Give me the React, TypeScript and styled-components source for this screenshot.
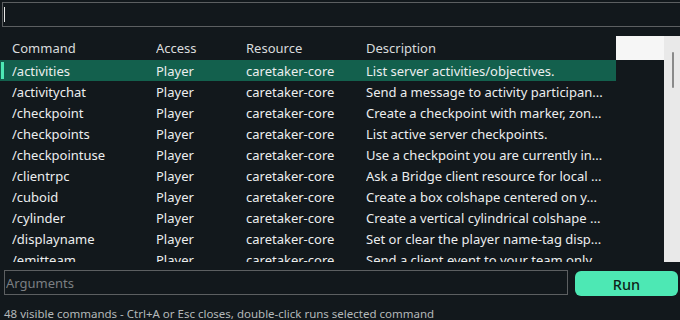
import styled, { createGlobalStyle } from "styled-components";

const GlobalStyle = createGlobalStyle`
  html, body {
    margin: 0;
    padding: 0;
    background: #12181c;
    overflow: hidden;
  }
  * {
    box-sizing: border-box;
  }
`;

const Page = styled.div`
  width: 680px;
  height: 320px;
  background: #12181c;
  color: #e4e6e7;
  font-family: "Noto Sans", "DejaVu Sans", sans-serif;
  font-size: 13px;
  display: flex;
  flex-direction: column;
  overflow: hidden;

  & > * {
    flex-shrink: 0;
  }
`;

const SearchBox = styled.div`
  position: relative;
  margin: 2px 0 0 2px;
  height: 25px;
  width: 690px;
  border: 1px solid #5c5f61;
  background: #12181c;
`;

const SearchInput = styled.input`
  display: block;
  width: 100%;
  height: 100%;
  border: none;
  outline: none;
  background: transparent;
  color: #e4e6e7;
  font: inherit;
  padding: 0 4px;
`;

const Caret = styled.span`
  position: absolute;
  left: 1px;
  top: 4px;
  width: 1px;
  height: 15px;
  background: #e8e8e8;
`;

const ListArea = styled.div`
  margin-top: 9px;
  height: 226px;
  display: flex;
  overflow: hidden;
`;

const Table = styled.div`
  flex: 1;
  display: flex;
  flex-direction: column;
  overflow: hidden;
`;

const HeaderRow = styled.div`
  height: 24px;
  flex-shrink: 0;
  display: flex;
`;

const HeaderCells = styled.div`
  width: 616px;
  display: grid;
  grid-template-columns: 144px 90px 120px 1fr;
  align-items: center;
  padding-left: 12px;
  color: #d9dcdd;
`;

const HeaderCorner = styled.div`
  flex: 1;
  background: #f6f6f6;
`;

const Row = styled.div<{ $selected?: boolean }>`
  position: relative;
  width: 616px;
  height: 21px;
  flex-shrink: 0;
  display: grid;
  grid-template-columns: 144px 90px 120px 1fr;
  align-items: center;
  padding-left: 12px;
  background: ${(p) => (p.$selected ? "#13604d" : "transparent")};
  color: #eceeef;
`;

const Accent = styled.span`
  position: absolute;
  left: 1px;
  top: 2px;
  width: 3px;
  height: 17px;
  background: #4de8b4;
`;

const Cell = styled.span`
  white-space: nowrap;
  overflow: hidden;
`;

const ScrollTrack = styled.div`
  width: 16px;
  background: #e9e9e9;
  display: flex;
  justify-content: center;
  padding-top: 16px;
  padding-left: 1px;
`;

const Thumb = styled.div`
  width: 2px;
  height: 36px;
  border-radius: 1px;
  background: #8a8a8a;
`;

const ArgsBar = styled.div`
  display: flex;
  align-items: flex-start;
  gap: 7px;
  margin: 8px 2px 0 4px;
`;

const ArgsInput = styled.input`
  width: 564px;
  height: 25px;
  border: 1px solid #5c5f61;
  background: #12181c;
  color: #e4e6e7;
  font: inherit;
  padding: 0 1px;
  outline: none;
  &::placeholder {
    color: #7b7f82;
  }
`;

const RunButton = styled.button`
  flex: 1;
  height: 25px;
  border: none;
  border-radius: 6px;
  background: #4de8b4;
  color: #0f1f19;
  font-family: inherit;
  font-size: 14.5px;
  font-weight: 500;
  padding: 0;
  margin-top: 1px;
`;

const Footer = styled.div`
  margin: 10px 0 0 4px;
  color: #b4b8ba;
  font-size: 11.5px;
  line-height: 16px;
  white-space: nowrap;
`;

type Command = {
  name: string;
  access: string;
  resource: string;
  description: string;
};

const commands: Command[] = [
  { name: "/activities", access: "Player", resource: "caretaker-core", description: "List server activities/objectives." },
  { name: "/activitychat", access: "Player", resource: "caretaker-core", description: "Send a message to activity participan..." },
  { name: "/checkpoint", access: "Player", resource: "caretaker-core", description: "Create a checkpoint with marker, zon..." },
  { name: "/checkpoints", access: "Player", resource: "caretaker-core", description: "List active server checkpoints." },
  { name: "/checkpointuse", access: "Player", resource: "caretaker-core", description: "Use a checkpoint you are currently in..." },
  { name: "/clientrpc", access: "Player", resource: "caretaker-core", description: "Ask a Bridge client resource for local ..." },
  { name: "/cuboid", access: "Player", resource: "caretaker-core", description: "Create a box colshape centered on y..." },
  { name: "/cylinder", access: "Player", resource: "caretaker-core", description: "Create a vertical cylindrical colshape ..." },
  { name: "/displayname", access: "Player", resource: "caretaker-core", description: "Set or clear the player name-tag disp..." },
  { name: "/emitteam", access: "Player", resource: "caretaker-core", description: "Send a client event to your team only..." },
];

export default function App() {
  return (
    <Page>
      <GlobalStyle />
      <SearchBox>
        <SearchInput readOnly />
        <Caret />
      </SearchBox>
      <ListArea>
        <Table>
          <HeaderRow>
            <HeaderCells>
              <Cell>Command</Cell>
              <Cell>Access</Cell>
              <Cell>Resource</Cell>
              <Cell>Description</Cell>
            </HeaderCells>
            <HeaderCorner />
          </HeaderRow>
          {commands.map((c, i) => (
            <Row key={c.name} $selected={i === 0}>
              {i === 0 && <Accent />}
              <Cell>{c.name}</Cell>
              <Cell>{c.access}</Cell>
              <Cell>{c.resource}</Cell>
              <Cell>{c.description}</Cell>
            </Row>
          ))}
        </Table>
        <ScrollTrack>
          <Thumb />
        </ScrollTrack>
      </ListArea>
      <ArgsBar>
        <ArgsInput placeholder="Arguments" />
        <RunButton>Run</RunButton>
      </ArgsBar>
      <Footer>48 visible commands - Ctrl+A or Esc closes, double-click runs selected command</Footer>
    </Page>
  );
}
